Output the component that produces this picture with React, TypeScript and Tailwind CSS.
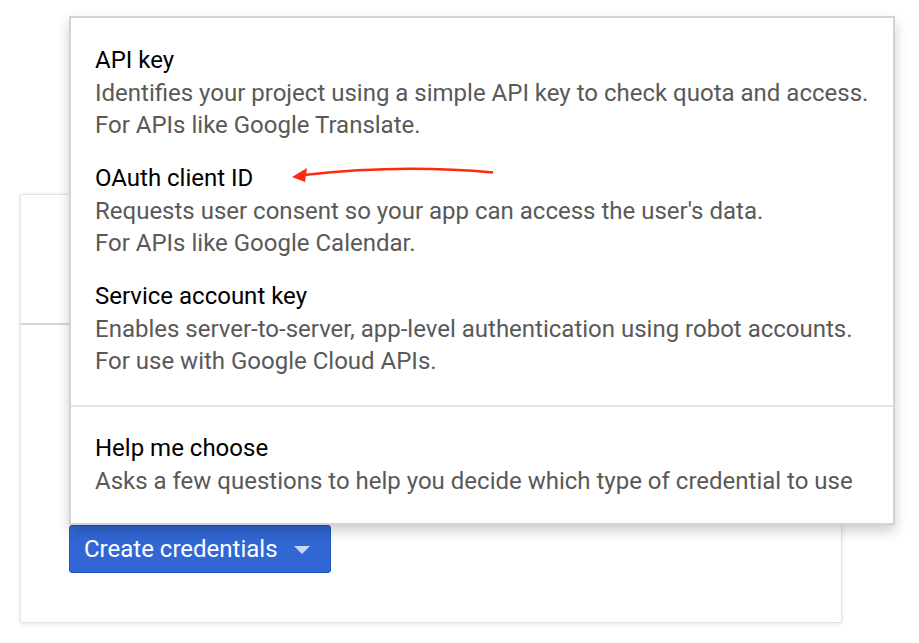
import React from "react";

const items = [
  {
    title: "API key",
    lines: [
      "Identifies your project using a simple API key to check quota and access.",
      "For APIs like Google Translate.",
    ],
  },
  {
    title: "OAuth client ID",
    lines: [
      "Requests user consent so your app can access the user's data.",
      "For APIs like Google Calendar.",
    ],
  },
  {
    title: "Service account key",
    lines: [
      "Enables server-to-server, app-level authentication using robot accounts.",
      "For use with Google Cloud APIs.",
    ],
  },
];

function MenuItem({ title, lines }: { title: string; lines: string[] }) {
  return (
    <div className="px-[24px] pb-[20px]">
      <div className="text-[24px] leading-[34px] text-black">{title}</div>
      {lines.map((l) => (
        <div key={l} className="text-[24px] leading-[32px] text-[#595959]">
          {l}
        </div>
      ))}
    </div>
  );
}

export default function App() {
  return (
    <div
      className="relative h-[643px] w-[919px] overflow-hidden bg-white"
      style={{ fontFamily: "Roboto, 'Liberation Sans', sans-serif" }}
    >
      {/* back card */}
      <div className="ml-[20px] mt-[194px] flex h-[429px] w-[822px] flex-col rounded-[2px] border border-[#e3e3e3] bg-white shadow-[0_1px_4px_rgba(0,0,0,0.12)]">
        <div className="h-[130px] border-b-2 border-[#d6d6d6]" />
        <div className="flex flex-1 items-start pl-[48px] pt-[200px]">
          <button
            type="button"
            className="flex h-[48px] w-[262px] items-center gap-[16px] rounded-[3px] border border-[#1f55c7] bg-[#3167d4] pl-[14px] text-[24px] text-white"
          >
            Create credentials
            <svg width="16" height="8" viewBox="0 0 16 8" className="mt-[2px]">
              <path d="M0 0 L16 0 L8 8 Z" fill="#c9d8f7" />
            </svg>
          </button>
        </div>
      </div>

      {/* dropdown menu */}
      <div className="absolute left-[69px] top-[16px] flex h-[509px] w-[826px] flex-col border-2 border-[#d3d3d3] bg-white shadow-[0_6px_12px_rgba(0,0,0,0.2)]">
        <div className="pt-[25px]">
          {items.map((it) => (
            <MenuItem key={it.title} {...it} />
          ))}
        </div>
        <div className="mt-[8px] border-t-2 border-[#e6e6e6] px-[24px] pt-[24px]">
          <div className="text-[24px] leading-[34px] text-black">Help me choose</div>
          <div className="text-[24px] leading-[32px] text-[#595959]">
            Asks a few questions to help you decide which type of credential to use
          </div>
        </div>
      </div>

      {/* annotation arrow */}
      <svg className="absolute left-0 top-0" width="919" height="643">
        <path d="M304 175 Q400 164 493 172.5" stroke="#ff2a0c" strokeWidth="2.5" fill="none" />
        <path d="M292 177 L307 168 L305 182 Z" fill="#ff2a0c" />
      </svg>
    </div>
  );
}
